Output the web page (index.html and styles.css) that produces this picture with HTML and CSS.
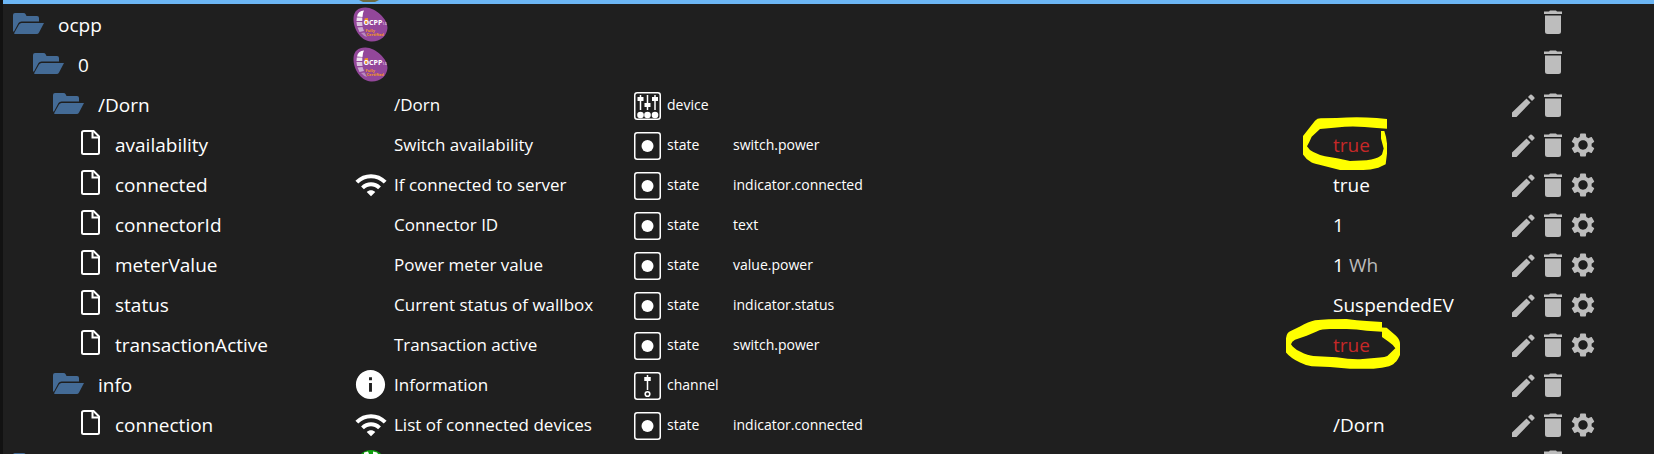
FILE: index.html
```html
<!DOCTYPE html>
<html lang="en">
<head>
<meta charset="utf-8">
<title>Objects</title>
<link rel="stylesheet" href="styles.css">
</head>
<body>
<svg class="defs" aria-hidden="true">
  <symbol id="folder" viewBox="0 0 31 21"><path d="M0 2Q0 0 2 0H10.500Q12 0 12.500 1L13.500 3H24Q26 3 26 5V8.500H8.500Q6.500 8.500 5.500 10L1 18.500H0Z"/><path d="M8.500 10H31L26 19.500Q25.300 21 23.500 21H2.500Q.5 21 1.500 19.500L6 11.500Q7 10 8.500 10Z"/></symbol>
  <symbol id="file" viewBox="0 0 19 25"><path d="M3 1H12.500L18 6.500V22.500Q18 24 16.500 24H2.500Q1 24 1 22.500V2.500Q1 1 3 1Z" fill="none" stroke="currentColor" stroke-width="2"/><path d="M11.500 1V7.500H18" fill="none" stroke="currentColor" stroke-width="2"/></symbol>
  <symbol id="wifi" viewBox="0 0 24 24"><path d="M1 9l2 2c4.970-4.970 13.030-4.970 18 0l2-2C16.930 2.930 7.080 2.930 1 9zm8 8l3 3 3-3c-1.650-1.660-4.340-1.660-6 0zm-4-4l2 2c2.760-2.760 7.240-2.760 10 0l2-2C15.140 9.140 8.870 9.140 5 13z"/></symbol>
  <symbol id="info" viewBox="0 0 24 24"><path d="M12 2C6.480 2 2 6.480 2 12s4.480 10 10 10 10-4.480 10-10S17.520 2 12 2zm1 15h-2v-6h2v6zm0-8h-2V7h2v2z"/></symbol>
  <symbol id="state" viewBox="0 0 27 28"><rect x=".75" y=".75" width="25.500" height="26.500" rx="2.500" fill="none" stroke="currentColor" stroke-width="1.500"/><circle cx="13.500" cy="14" r="6"/></symbol>
  <symbol id="channel" viewBox="0 0 27 28"><rect x=".75" y=".75" width="25.500" height="26.500" rx="2.500" fill="none" stroke="currentColor" stroke-width="1.500"/><path d="M12.750 3h1.500v2h2.500v4h-2.500v9h-1.500v-9h-2.500v-4h2.500z"/><circle cx="13.500" cy="22" r="2.300" fill="none" stroke="currentColor" stroke-width="1.600"/></symbol>
  <symbol id="device" viewBox="0 0 27 28"><rect x=".75" y=".75" width="25.500" height="26.500" rx="2.500" fill="none" stroke="currentColor" stroke-width="1.500"/><path d="M5.750 3h1.500v2h2.250v4h-2.250v9h-1.500v-9h-2.250v-4h2.250zM12.750 3h1.500v8h2.250v4h-2.250v3h-1.500v-3h-2.250v-4h2.250zM20.250 3h1.500v2h2.250v4h-2.250v9h-1.500v-9h-2.250v-4h2.250z"/><circle cx="6.500" cy="23" r="3.300"/><circle cx="13.500" cy="23" r="3.300"/><circle cx="21" cy="23" r="3.300"/></symbol>
  <symbol id="ocpp" viewBox="0 0 35 35" overflow="visible"><path d="M12 .5C22 0 35 12 34.500 21C34 29 27 35 18 34.500C8 34 0 22 .5 11C1 4 5 .5 12 .5Z" fill="#93479a"/><path d="M11 3.500Q5 4 4 9.500L9.500 10Q9.500 6 11 3.500Z" fill="#fff"/><path d="M3.800 10.500H9.300V14H3.500Z" fill="#f0e2f2"/><path d="M3.500 15H9.200L9.500 19H4Z" fill="#dcc3df"/><path d="M4.500 20.500L9.500 20L11 24L6.500 25Z" fill="#cdaad2"/><path d="M8 26L11.500 25.500L14 30Q10.500 29 8 26Z" fill="#b98abf"/><path d="M11.500 11.500L15 11L14.500 16L12 17Z" fill="#f39a1e"/><text x="10.500" y="17.500" font-size="7" font-weight="700" fill="#fff">OCPP</text><text x="29.500" y="17.500" font-size="3" fill="#fff">1.6</text><text x="12.500" y="24.500" font-size="4" font-weight="700" fill="#f39a1e">Fully</text><text x="13.500" y="29" font-size="4" font-weight="700" fill="#f39a1e">Certified</text></symbol>
  <symbol id="pencil" viewBox="0 0 23 23"><path d="M0 18.500L14.500 4.500L18.500 8.500L4.500 23H0ZM16 3L18.200 .8Q19 0 19.800 .8L22.300 3.200Q23 4 22.300 4.800L20 7Z"/></symbol>
  <symbol id="trash" viewBox="0 0 18 24"><path d="M0 1.500H5L6 .5H12L13 1.500H18V4H0ZM1 5.500H17V21.500Q17 24 14.500 24H3.500Q1 24 1 21.500Z"/></symbol>
  <symbol id="gear" viewBox="2 2 20 20"><path d="M19.140 12.940c.04-.3.060-.61.060-.94 0-.32-.02-.64-.07-.94l2.030-1.580c.18-.14.230-.41.120-.61l-1.920-3.320c-.12-.22-.37-.29-.59-.22l-2.390.96c-.5-.38-1.030-.7-1.620-.94l-.36-2.540c-.04-.24-.24-.41-.48-.41h-3.840c-.24 0-.43.170-.47.410l-.36 2.540c-.59.240-1.130.570-1.620.94l-2.390-.96c-.22-.08-.47 0-.59.220L2.740 8.870c-.12.210-.08.470.12.610l2.030 1.580c-.05.300-.09.630-.09.940s.02.640.07.940l-2.030 1.580c-.18.140-.23.410-.12.610l1.920 3.320c.12.220.37.290.59.220l2.390-.96c.5.380 1.030.7 1.620.94l.36 2.540c.05.240.24.410.48.410h3.840c.24 0 .44-.17.470-.41l.36-2.540c.59-.24 1.130-.56 1.620-.94l2.390.96c.22.080.47 0 .59-.22l1.920-3.320c.12-.22.070-.47-.12-.61l-2.010-1.580zM12 15.900c-2.150 0-3.900-1.750-3.900-3.900s1.750-3.900 3.900-3.900 3.900 1.750 3.900 3.900-1.750 3.900-3.900 3.900z"/></symbol>
  <symbol id="online" viewBox="0 0 30 30"><circle cx="15" cy="15" r="15" fill="#0f9f0f"/><path d="M8 2.500L12 1.500L13 4H8ZM17 1.500L21 2.500L22 4H17Z" fill="#fff"/></symbol>
</svg>
<main class="browser">
  <div class="selected"><svg class="selected-icon" viewBox="0 0 20 2"><path d="M0 0H20L16 2H4Z" fill="#6d6a42"/></svg></div>
  <table class="tree">
    <colgroup><col class="c-name"><col class="c-icon"><col class="c-desc"><col class="c-type"><col><col class="c-value"><col class="c-actions"></colgroup>
    <tbody id="rows"></tbody>
  </table>
</main>
<script src="tree.js"></script>
</body>
</html>
```
FILE: styles.css
```css
body {
  margin: 0;
  height: 100vh;
  overflow: hidden;
  background: #1f1f1f;
  color: #fff;
  font-family: "Segoe UI", "Open Sans", "Noto Sans", sans-serif;
}
svg { display: block; fill: currentColor; flex: none; }
.defs { position: absolute; width: 0; height: 0; }
.browser { height: 100%; box-sizing: border-box; border-left: 3px solid #121212; overflow: hidden; }
.selected { height: 4px; padding-left: 356px; background: #6cb6f5; }
.selected-icon { width: 20px; height: 2px; }
.tree { width: 100%; margin-top: 1px; table-layout: fixed; border-collapse: collapse; }
.tree td { height: 40px; padding: 0; white-space: nowrap; vertical-align: middle; }
.c-name { width: 350px; }
.c-icon { width: 41px; }
.c-desc { width: 240px; }
.c-type { width: 99px; }
.c-value { width: 175px; }
.c-actions { width: 146px; }
.line { display: flex; align-items: center; height: 40px; line-height: 40px; }
.name { font-size: 19px; }
.level-0 { padding-left: 10px; }
.level-1 { padding-left: 30px; }
.level-2 { padding-left: 50px; }
.level-3 { padding-left: 78px; }
.level-0, .level-1, .level-2 { gap: 14px; }
.level-3 { gap: 15px; }
.folder { width: 31px; height: 21px; color: #446b96; margin-bottom: 3px; }
.file { width: 19px; height: 25px; margin-bottom: 5px; }
.kind-icon { justify-content: center; width: 35px; }
.ocpp { width: 35px; height: 35px; margin-bottom: 1px; }
.wifi { width: 34px; height: 34px; }
.info { width: 35px; height: 35px; margin-bottom: 2px; }
.online { width: 30px; height: 30px; }
.desc { font-size: 17px; }
.type { font-size: 14px; gap: 6px; }
.type svg { width: 27px; height: 28px; margin-top: 2px; }
.role { font-size: 14px; }
.value { position: relative; font-size: 19px; gap: 5px; }
.unit { color: #bbb; }
.unacknowledged { color: #c62828; }
.mark { position: absolute; color: #ff0; }
.mark-availability { left: -30px; top: -8px; width: 84px; height: 53px; }
.mark-transaction { left: -47px; top: -6px; width: 114px; height: 50px; }
.actions { gap: 9px; padding-left: 4px; color: #bdbdbd; }
.actions button { display: block; padding: 0; border: 0; background: none; color: inherit; cursor: pointer; }
.actions .gap { width: 23px; }
.pencil { width: 23px; height: 23px; }
.trash { width: 18px; height: 24px; }
.gear { width: 24px; height: 24px; }
.raised { padding-bottom: 6px; height: 34px; }
```
FILE: tree.js
```js
const objects = [
  { level: 0, name: "ocpp", icon: "ocpp" },
  { level: 1, name: "0", icon: "ocpp" },
  { level: 2, name: "/Dorn", desc: "/Dorn", type: "device", edit: true },
  { level: 3, name: "availability", desc: "Switch availability", type: "state", role: "switch.power", value: "true", unack: true, mark: "availability" },
  { level: 3, name: "connected", icon: "wifi", desc: "If connected to server", type: "state", role: "indicator.connected", value: "true" },
  { level: 3, name: "connectorId", desc: "Connector ID", type: "state", role: "text", value: "1" },
  { level: 3, name: "meterValue", desc: "Power meter value", type: "state", role: "value.power", value: "1", unit: "Wh" },
  { level: 3, name: "status", desc: "Current status of wallbox", type: "state", role: "indicator.status", value: "SuspendedEV" },
  { level: 3, name: "transactionActive", desc: "Transaction active", type: "state", role: "switch.power", value: "true", unack: true, mark: "transaction" },
  { level: 2, name: "info", icon: "info", desc: "Information", type: "channel", edit: true },
  { level: 3, name: "connection", icon: "wifi", desc: "List of connected devices", type: "state", role: "indicator.connected", value: "/Dorn" },
  { level: 0, name: "", icon: "online" }
];

const marks = {
  availability: ["99 51 252 158", "M99 108L135 62Q142 55 152 55L200 54Q260 49 320 54L351 57V86L320 84Q255 76 200 82L150 87L125 110Q118 127 111 138Q118 150 130 155Q150 165 165 168L205 175L240 182L290 180Q320 176 330 168L336 163L341 145L333 115V93H343Q349 110 351 130V160L347 192L325 202Q300 209 280 209H210L160 196Q135 192 125 187Q108 178 99 163Z"],
  transaction: ["48 58 342 149", "M48 115Q50 98 62 94L90 80Q115 66 135 62Q170 58 230 58Q260 63 290 64L336 67V83L350 84L378 108Q390 120 390 132V165Q382 182 375 188Q365 199 350 200Q320 206 300 206H240L180 201L125 199Q105 196 90 188Q62 175 48 158ZM336 96L290 93Q260 88 230 88H180Q155 88 140 95L110 108L75 120Q65 125 63 133Q70 145 90 155Q115 168 130 168L200 172Q240 179 270 178L330 173Q345 172 352 168L376 145Q370 135 355 125L336 112Z"]
};

const svg = id => `<svg class="${id}"><use href="#${id}"/></svg>`;
const button = (id, label) => `<button type="button" aria-label="${label}">${svg(id)}</button>`;

document.getElementById("rows").innerHTML = objects.map(o => {
  const isState = o.type === "state";
  const mark = o.mark
    ? `<svg class="mark mark-${o.mark}" viewBox="${marks[o.mark][0]}" preserveAspectRatio="none"><path fill-rule="evenodd" d="${marks[o.mark][1]}"/></svg>` : "";
  return `<tr>
    <td><div class="line name level-${o.level}">${svg(isState ? "file" : "folder")}<span>${o.name}</span></div></td>
    <td><div class="line kind-icon">${o.icon ? svg(o.icon) : ""}</div></td>
    <td><div class="line desc">${o.desc || ""}</div></td>
    <td><div class="line type">${o.type ? svg(o.type) + `<span>${o.type}</span>` : ""}</div></td>
    <td><div class="line role">${o.role || ""}</div></td>
    <td><div class="line value">${o.value ? `<span class="${o.unack ? "unacknowledged" : ""}">${o.value}</span>` : ""}${o.unit ? `<span class="unit">${o.unit}</span>` : ""}${mark}</div></td>
    <td><div class="line actions${o.type ? "" : " raised"}">${o.type ? button("pencil", "Edit") : `<span class="gap"></span>`}${button("trash", "Delete")}${isState ? button("gear", "Settings") : ""}</div></td>
  </tr>`;
}).join("");
```
